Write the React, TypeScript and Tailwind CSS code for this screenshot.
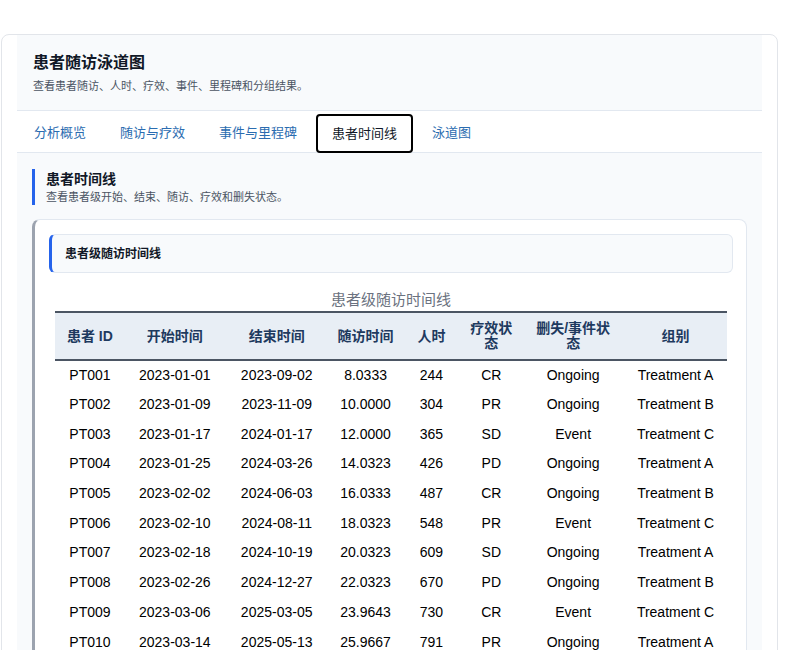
import React from "react";

const rows = [
  ["PT001","2023-01-01","2023-09-02","8.0333","244","CR","Ongoing","Treatment A"],
  ["PT002","2023-01-09","2023-11-09","10.0000","304","PR","Ongoing","Treatment B"],
  ["PT003","2023-01-17","2024-01-17","12.0000","365","SD","Event","Treatment C"],
  ["PT004","2023-01-25","2024-03-26","14.0323","426","PD","Ongoing","Treatment A"],
  ["PT005","2023-02-02","2024-06-03","16.0333","487","CR","Ongoing","Treatment B"],
  ["PT006","2023-02-10","2024-08-11","18.0323","548","PR","Event","Treatment C"],
  ["PT007","2023-02-18","2024-10-19","20.0323","609","SD","Ongoing","Treatment A"],
  ["PT008","2023-02-26","2024-12-27","22.0323","670","PD","Ongoing","Treatment B"],
  ["PT009","2023-03-06","2025-03-05","23.9643","730","CR","Event","Treatment C"],
  ["PT010","2023-03-14","2025-05-13","25.9667","791","PR","Ongoing","Treatment A"],
];
const widths = [70,100,104,74,58,62,102,103];
const heads = ["患者 ID","开始时间","结束时间","随访时间","人时","疗效状态","删失/事件状态","组别"];

export default function App() {
  return (
    <div className="w-[790px] h-[650px] overflow-hidden bg-white pt-[34px] pl-[1px] pr-[12px]" style={{fontFamily:'"Liberation Sans","Noto Sans CJK SC",sans-serif'}}>
      <div className="border border-[#e2e5ea] rounded-lg bg-white px-[15px] h-[700px]">
        <div className="bg-[#f8fafc] px-[16px] pt-[16px] pb-[16px] border-b border-[#e2e8f0]">
          <div className="text-[16px] font-bold text-[#111827] leading-[24px]">患者随访泳道图</div>
          <div className="text-[11px] text-[#4b5563] mt-[3px] leading-[16px]">查看患者随访、人时、疗效、事件、里程碑和分组结果。</div>
        </div>
        <div className="flex items-end h-[42px] border-b border-[#e2e8f0] text-[13px]">
          {["分析概览","随访与疗效","事件与里程碑","患者时间线","泳道图"].map((t,i)=> i===3 ? (
            <div key={t} className="h-[39px] w-[97px] mb-[-1px] flex items-center justify-center border-2 border-black rounded-[4px] bg-white text-[#111827] mx-[2px]">{t}</div>
          ) : (
            <div key={t} className="h-[38px] px-[17px] flex items-center text-[#2b6cb0]">{t}</div>
          ))}
        </div>
        <div className="bg-[#f8fafc] px-[15px] pt-[16px]">
          <div className="border-l-[3px] border-[#2563eb] pl-[11px]">
            <div className="text-[14px] font-bold text-[#111827] leading-[20px]">患者时间线</div>
            <div className="text-[11px] text-[#4b5563] leading-[16px]">查看患者级开始、结束、随访、疗效和删失状态。</div>
          </div>
          <div className="mt-[14px] bg-white border border-[#e2e8f0] border-l-[3px] border-l-[#9ca3af] rounded-lg pl-[14px] pr-[13px] pt-[14px] h-[500px]">
            <div className="h-[39px] border border-[#e2e8f0] border-l-[3px] border-l-[#2563eb] rounded-md bg-[#f8fafc] flex items-center pl-[13px] text-[12px] font-bold text-[#111827]">患者级随访时间线</div>
            <div className="px-[6px] mt-[16px]">
              <div className="text-center text-[15px] text-[#6b7280] leading-[22px]">患者级随访时间线</div>
              <table className="border-collapse text-[14px] text-black" style={{tableLayout:"fixed"}}>
                <colgroup>{widths.map((w,i)=><col key={i} style={{width:w}}/>)}</colgroup>
                <thead>
                  <tr className="bg-[#e8eef5] border-t-2 border-b-2 border-[#4b5563] h-[48px]">
                    {heads.map(h=><th key={h} className="font-bold text-[14px] text-[#1e3a5f] leading-[15px] px-[8px]">{h}</th>)}
                  </tr>
                </thead>
                <tbody>
                  {rows.map(r=>(
                    <tr key={r[0]} className="h-[29.7px]">
                      {r.map((c,i)=><td key={i} className="text-center whitespace-nowrap">{c}</td>)}
                    </tr>
                  ))}
                </tbody>
              </table>
            </div>
          </div>
        </div>
      </div>
    </div>
  );
}
